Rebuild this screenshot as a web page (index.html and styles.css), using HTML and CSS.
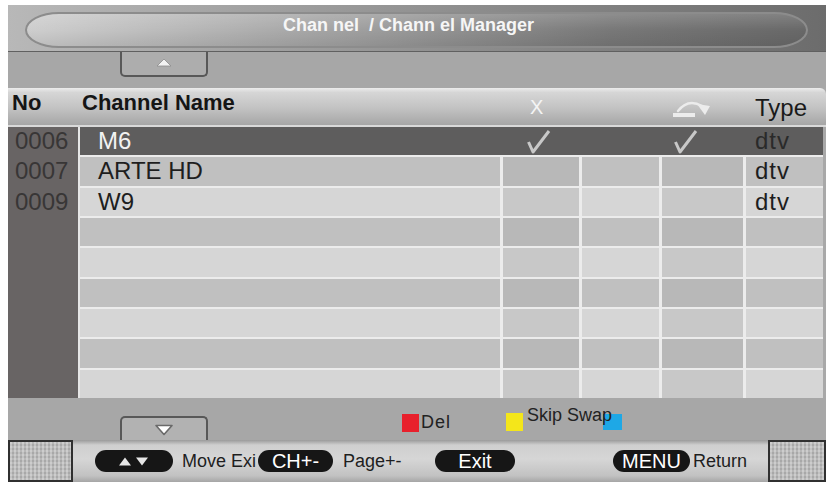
FILE: index.html
```html
<!DOCTYPE html>
<html>
<head>
<meta charset="utf-8">
<title>Channel Manager</title>
<link rel="stylesheet" href="styles.css">
</head>
<body>
<div class="screen">
  <div class="titlebar">
    <div class="titlepill"><span class="title">Chan nel&nbsp; / Chann el Manager</span></div>
  </div>

  <div class="band band-top">
    <div class="tab tab-up">
      <svg width="16" height="9" viewBox="0 0 16 9"><polygon points="1,8 8,1 15,8" fill="#f2f2f2" stroke="#8a8a8a" stroke-width="0.8"/></svg>
    </div>
  </div>

  <div class="header">
    <div class="h-no">No</div>
    <div class="h-name">Channel Name</div>
    <div class="h-del">X</div>
    <div class="h-skip"></div>
    <div class="h-swap">
      <svg width="42" height="20" viewBox="0 0 42 20">
        <path d="M6 13 Q 16 0 30 8" stroke="#ececec" stroke-width="2.4" fill="none" stroke-linecap="round"/>
        <polygon points="25,6 38,8 33,17" fill="#ececec"/>
        <rect x="1" y="15" width="22" height="4" fill="#ececec"/>
      </svg>
    </div>
    <div class="h-type">Type</div>
  </div>
  <div class="sep-line"></div>

  <div class="body">
    <div class="nums">
      <div class="num">0006</div>
      <div class="num">0007</div>
      <div class="num">0009</div>
      <div class="num"></div>
      <div class="num"></div>
      <div class="num"></div>
      <div class="num"></div>
      <div class="num"></div>
      <div class="num"></div>
    </div>
    <div class="rows">
      <div class="row sel">
        <div class="cell name">M6</div>
        <div class="cell c2 chk"><svg width="24" height="24" viewBox="0 0 24 24"><path d="M1.5 12 L6 22 L22 1" stroke="#c8c8c8" stroke-width="3" fill="none" stroke-linejoin="round"/></svg></div>
        <div class="cell c3"></div>
        <div class="cell c4 chk"><svg width="24" height="24" viewBox="0 0 24 24"><path d="M1.5 12 L6 22 L22 1" stroke="#c8c8c8" stroke-width="3" fill="none" stroke-linejoin="round"/></svg></div>
        <div class="cell type">dtv</div>
      </div>
      <div class="row mid">
        <div class="cell name">ARTE HD</div>
        <div class="cell c2"></div>
        <div class="cell c3"></div>
        <div class="cell c4"></div>
        <div class="cell type">dtv</div>
      </div>
      <div class="row light">
        <div class="cell name">W9</div>
        <div class="cell c2"></div>
        <div class="cell c3"></div>
        <div class="cell c4"></div>
        <div class="cell type">dtv</div>
      </div>
      <div class="row mid">
        <div class="cell name"></div><div class="cell c2"></div><div class="cell c3"></div><div class="cell c4"></div><div class="cell type"></div>
      </div>
      <div class="row light">
        <div class="cell name"></div><div class="cell c2"></div><div class="cell c3"></div><div class="cell c4"></div><div class="cell type"></div>
      </div>
      <div class="row mid">
        <div class="cell name"></div><div class="cell c2"></div><div class="cell c3"></div><div class="cell c4"></div><div class="cell type"></div>
      </div>
      <div class="row light">
        <div class="cell name"></div><div class="cell c2"></div><div class="cell c3"></div><div class="cell c4"></div><div class="cell type"></div>
      </div>
      <div class="row mid">
        <div class="cell name"></div><div class="cell c2"></div><div class="cell c3"></div><div class="cell c4"></div><div class="cell type"></div>
      </div>
      <div class="row light">
        <div class="cell name"></div><div class="cell c2"></div><div class="cell c3"></div><div class="cell c4"></div><div class="cell type"></div>
      </div>
    </div>
  </div>

  <div class="band band-bottom">
    <div class="tab tab-down">
      <svg width="20" height="12" viewBox="0 0 20 12"><polygon points="2,1.5 18,1.5 10,10.5" fill="#ffffff" stroke="#6a6a6a" stroke-width="1.6" stroke-linejoin="round"/></svg>
    </div>
    <div class="key key-red"></div>
    <div class="key-label del">Del</div>
    <div class="key key-yellow"></div>
    <div class="key-label skip">Skip Swap</div>
    <div class="key key-blue"></div>
  </div>

  <div class="footer">
    <div class="sq"></div>
    <div class="pill pill-nav">
      <svg width="30" height="9" viewBox="0 0 30 9"><polygon points="0,8.5 6,0.5 12,8.5" fill="#e6e6e6"/><polygon points="17,0.5 29,0.5 23,8.5" fill="#e6e6e6"/></svg>
    </div>
    <div class="ftext t-move">Move Exi</div>
    <div class="pill pill-ch">CH+-</div>
    <div class="ftext t-page">Page+-</div>
    <div class="pill pill-exit">Exit</div>
    <div class="pill pill-menu">MENU</div>
    <div class="ftext t-ret">Return</div>
    <div class="sq sq-right"></div>
  </div>
</div>
</body>
</html>
```

FILE: styles.css
```css
body {
  margin: 0;
  background: #ffffff;
  font-family: "Liberation Sans", Arial, sans-serif;
}

.screen {
  margin: 5px 0 0 8px;
  width: 818px;
  background: #a8a8a8;
}

/* ---------- title ---------- */
.titlebar {
  height: 47px;
  box-sizing: border-box;
  padding: 7px 18px 4px 17px;
  background: linear-gradient(to right, #b8b8b8, #969696 45%, #6c6c6c);
  border-bottom: 1px solid #606060;
}

.titlepill {
  height: 36px;
  box-sizing: border-box;
  border: 2px solid #8c8c8c;
  border-radius: 34px / 18px;
  background:
    linear-gradient(to bottom, rgba(255,255,255,0.16), rgba(0,0,0,0) 50%, rgba(0,0,0,0.08)),
    linear-gradient(to right, #cecece, #a2a2a2 40%, #787878 75%, #686868);
  display: flex;
  justify-content: center;
  padding: 2px 16px 0 0;
}

.title {
  font-size: 18px;
  line-height: 18px;
  font-weight: bold;
  color: #f6f6f6;
  white-space: nowrap;
}

/* ---------- bands & tabs ---------- */
.band {
  display: flex;
  background: #a7a7a7;
}

.band-top {
  height: 36px;
  padding-left: 112px;
}

.tab {
  width: 88px;
  box-sizing: border-box;
  display: flex;
  justify-content: center;
  align-items: center;
  background: #adadad;
  border: 2px solid #585858;
}

.tab-up {
  height: 25px;
  border-top: none;
  border-radius: 0 0 5px 5px;
  padding-bottom: 3px;
}

.band-bottom {
  height: 42px;
  align-items: flex-start;
  padding-left: 112px;
}

.tab-down {
  align-self: flex-end;
  height: 24px;
  border-bottom: none;
  border-radius: 5px 5px 0 0;
  background: #b2b2b2;
  padding-top: 2px;
}

.key {
  width: 17px;
  height: 18px;
}

.key-red {
  margin: 16px 0 0 194px;
  background: #e8202c;
}

.key-yellow {
  margin-top: 15px;
  background: #f4e61a;
}

.key-blue {
  margin: 16px 0 0 -9px;
  width: 19px;
  height: 16px;
  background: #1ea8e6;
}

.key-label {
  font-size: 18px;
  line-height: 20px;
  color: #222222;
  white-space: nowrap;
}

.del {
  margin: 14px 0 0 2px;
  width: 85px;
  letter-spacing: 1px;
}

.skip {
  margin: 7px 0 0 4px;
  position: relative;
  z-index: 1;
}

/* ---------- header ---------- */
.header {
  height: 37px;
  display: grid;
  grid-template-columns: 69px 420px 76px 77px 81px 77px;
  column-gap: 3px;
  align-items: center;
  background: linear-gradient(to bottom, #ececec 0, #d6d6d6 12%, #c2c2c2 55%, #a6a6a6 100%);
  border-radius: 0 6px 6px 0;
}

.h-no,
.h-name {
  font-size: 22px;
  line-height: 22px;
  font-weight: bold;
  color: #151515;
  padding-bottom: 8px;
}

.h-no {
  padding-left: 4px;
}

.h-name {
  padding-left: 2px;
}

.h-del {
  font-size: 20px;
  line-height: 20px;
  color: #f4f4f4;
  padding-left: 27px;
  padding-top: 1px;
}

.h-swap {
  padding-left: 10px;
  display: flex;
  align-items: center;
  padding-top: 3px;
}

.h-type {
  font-size: 24px;
  line-height: 24px;
  color: #1a1a1a;
  padding-left: 9px;
  padding-top: 2px;
}

.sep-line {
  height: 2px;
  background: #d9d9d9;
}

/* ---------- list ---------- */
.body {
  display: flex;
  height: 271px;
}

.nums {
  width: 70px;
  background: #686464;
  display: grid;
  grid-template-rows: repeat(9, 1fr);
  row-gap: 2px;
}

.num {
  display: flex;
  align-items: center;
  padding-left: 7px;
  font-size: 24px;
  line-height: 24px;
  color: #383636;
}

.rows {
  width: 743px;
  border-left: 2px solid #e6e6e6;
  display: grid;
  grid-template-rows: repeat(9, 1fr);
  row-gap: 2px;
  background: #ececec;
}

.row {
  display: grid;
  grid-template-columns: 420px 76px 77px 81px 77px;
  column-gap: 3px;
}

.cell {
  display: flex;
  align-items: center;
  font-size: 24px;
  line-height: 24px;
  color: #1e1e1e;
}

.name {
  padding-left: 18px;
}

.type {
  padding-left: 9px;
  letter-spacing: 1px;
}

.row.sel {
  background: #5e5d5d;
}

.row.sel .cell {
  background: #5e5d5d;
}

.row.sel .name {
  color: #f2f2f2;
}

.row.sel .type {
  color: #2a2a2a;
}

.row.sel .c2 {
  padding-left: 24px;
}

.row.sel .c4 {
  padding-left: 12px;
}

.chk svg {
  margin-top: 2px;
}

.row.mid .cell {
  background: #c0c0c0;
}

.row.mid .c2,
.row.mid .c4 {
  background: #b8b8b8;
}

.row.light .cell {
  background: #d6d6d6;
}

.row.light .c2,
.row.light .c4 {
  background: #c8c8c8;
}

/* ---------- footer ---------- */
.footer {
  height: 42px;
  display: flex;
  align-items: center;
  background: linear-gradient(to bottom, #9a9a9a 0, #cfcfcf 12%, #d6d6d6 45%, #c2c2c2 85%, #a6a6a6 100%);
}

.sq {
  align-self: stretch;
  width: 65px;
  box-sizing: border-box;
  border: 2px solid #303030;
  background:
    repeating-linear-gradient(to bottom, rgba(255,255,255,0.18) 0 2px, rgba(0,0,0,0) 2px 4px),
    repeating-linear-gradient(to right, #c2c2c2 0 2px, #a8a8a8 2px 4px);
}

.sq-right {
  width: 58px;
  margin-left: auto;
}

.pill {
  height: 22px;
  border-radius: 11px;
  background: #161616;
  color: #ffffff;
  font-size: 20px;
  line-height: 20px;
  display: flex;
  align-items: center;
  justify-content: center;
  white-space: nowrap;
}

.pill-nav {
  margin-left: 22px;
  width: 78px;
}

.pill-ch {
  width: 75px;
}

.pill-exit {
  width: 80px;
}

.pill-menu {
  margin-left: 98px;
  width: 77px;
}

.ftext {
  font-size: 18px;
  line-height: 18px;
  color: #1e1e1e;
  white-space: nowrap;
}

.t-move {
  margin-left: 9px;
  width: 76px;
  overflow: hidden;
}

.t-page {
  margin-left: 10px;
  width: 92px;
}

.t-ret {
  margin-left: 3px;
}
```
